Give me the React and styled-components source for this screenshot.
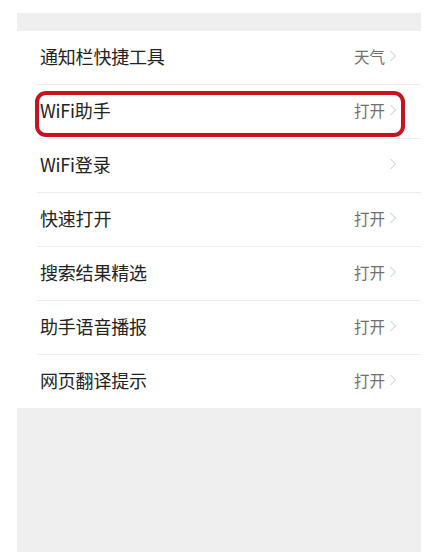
import React from "react";
import styled, { createGlobalStyle } from "styled-components";

const Global = createGlobalStyle`
  html, body { margin: 0; padding: 0; background: #ffffff; }
  body { font-family: "Noto Sans CJK SC", "Noto Sans", sans-serif; }
`;

const Page = styled.div`
  padding-top: 13px;
  padding-left: 17px;
  width: 404px;
`;

const Panel = styled.div`
  background: #efefef;
  min-height: 539px;
  padding-top: 18px;
  box-sizing: border-box;
  display: flex;
  flex-direction: column;
`;

const List = styled.div`
  background: #ffffff;
  display: flex;
  flex-direction: column;
`;

const Row = styled.div`
  position: relative;
  height: ${(p) => (p.$last ? "53px" : "54px")};
  margin-left: 20px;
  padding-left: 3px;
  padding-right: 24px;
  padding-bottom: 3px;
  box-sizing: border-box;
  display: flex;
  align-items: center;
  justify-content: space-between;
  border-bottom: ${(p) => (p.$last ? "none" : "1px solid #ededed")};
`;

const Label = styled.span`
  font-size: 18px;
  color: #222222;
  letter-spacing: -0.2px;
`;

const Right = styled.span`
  display: flex;
  align-items: center;
  gap: 4px;
`;

const Value = styled.span`
  font-size: 15.5px;
  color: #707070;
`;

const Highlight = styled.div`
  position: absolute;
  left: -2px;
  top: 6px;
  width: 370px;
  height: 46px;
  box-sizing: border-box;
  border: 4px solid #c7121f;
  border-radius: 11px;
  pointer-events: none;
`;

const Chevron = () => (
  <svg width="8" height="12" viewBox="0 0 8 12" fill="none">
    <path d="M1.5 1 L6.5 6 L1.5 11" stroke="#c6c6c6" strokeWidth="1" />
  </svg>
);

const items = [
  { label: "通知栏快捷工具", value: "天气" },
  { label: "WiFi助手", value: "打开", mark: true },
  { label: "WiFi登录", value: "" },
  { label: "快速打开", value: "打开" },
  { label: "搜索结果精选", value: "打开" },
  { label: "助手语音播报", value: "打开" },
  { label: "网页翻译提示", value: "打开" },
];

export default function App() {
  return (
    <>
      <Global />
      <Page>
        <Panel>
          <List>
            {items.map((it, i) => (
              <Row key={it.label} $last={i === items.length - 1}>
                <Label>{it.label}</Label>
                <Right>
                  {it.value && <Value>{it.value}</Value>}
                  <Chevron />
                </Right>
                {it.mark && <Highlight />}
              </Row>
            ))}
          </List>
        </Panel>
      </Page>
    </>
  );
}
